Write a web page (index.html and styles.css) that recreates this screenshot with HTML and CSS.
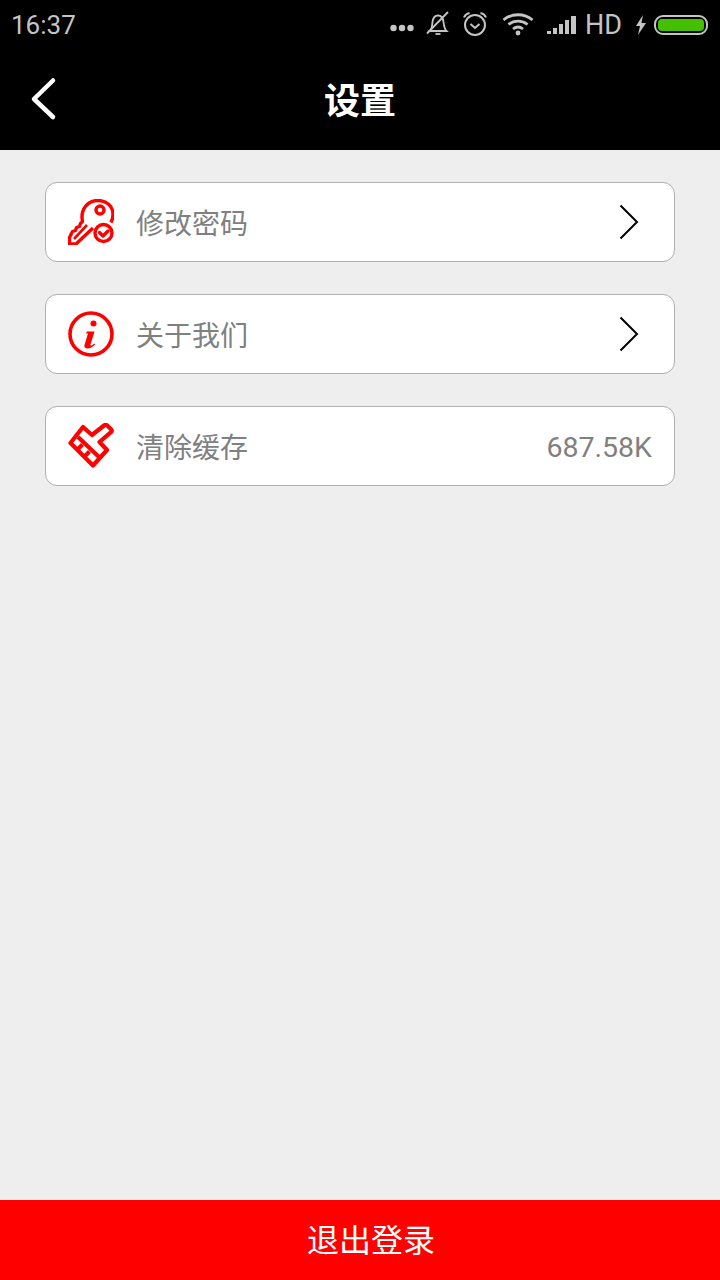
FILE: index.html
```html
<!DOCTYPE html>
<html lang="zh-CN">
<head>
    <meta charset="UTF-8">
    <meta name="viewport" content="width=device-width, initial-scale=1.0">
    <title>设置</title>
    <link rel="stylesheet" href="styles.css">
</head>
<body>
    <div class="page">
        <div class="status-bar">
            <span class="time">16:37</span>
            <div class="status-icons">
                <svg class="st-dots" width="24" height="8" viewBox="0 0 24 8"><circle cx="3.500" cy="4" r="3.200" fill="#c4c4c4"/><circle cx="12" cy="4" r="3.200" fill="#c4c4c4"/><circle cx="20.500" cy="4" r="3.200" fill="#c4c4c4"/></svg>
                <svg class="st-bell" width="24" height="26" viewBox="0 0 24 26" fill="none" stroke="#c4c4c4" stroke-width="1.800"><path d="M4 20c2-2 2-5 2.500-9C7 7 9 4.500 12 4.500S17 7 17.500 11c.5 4 .8 7 3 9H2.500"/><path d="M9.500 23h5"/><path d="M1 22.500 22 1"/></svg>
                <svg class="st-alarm" width="26" height="26" viewBox="0 0 26 26" fill="none" stroke="#c4c4c4" stroke-width="2"><circle cx="13" cy="14" r="10"/><path d="M8.500 13l4.500 4 4.500-4"/><path d="M2 6.500C3 4 5 2.500 7.500 2"/><path d="M24 6.500C23 4 21 2.500 18.500 2"/></svg>
                <svg class="st-wifi" width="32" height="24" viewBox="0 0 32 24" fill="none" stroke="#c4c4c4" stroke-width="2.800"><path d="M1.500 8C9.500 1 22.500 1 30.500 8"/><path d="M6.500 12.500C12 8 20 8 25.500 12.500"/><path d="M11 17c3-2.400 7-2.400 10 0"/><circle cx="16" cy="21" r="2.400" fill="#c4c4c4" stroke="none"/></svg>
                <svg class="st-signal" width="30" height="20" viewBox="0 0 30 20" fill="#c4c4c4"><rect x="0" y="16" width="4" height="3"/><rect x="6" y="13" width="4" height="6"/><rect x="12" y="9" width="4" height="10"/><rect x="18" y="5" width="4" height="14"/><rect x="24" y="1" width="5" height="18"/></svg>
                <span class="st-hd">HD</span>
                <svg class="st-bolt" width="12" height="20" viewBox="0 0 12 20" fill="#c4c4c4"><path d="M8 0 1 11h4l-2 9 8-12H6.500z"/></svg>
                <div class="battery"><div class="battery-fill"></div></div>
            </div>
        </div>

        <div class="title-bar">
            <svg class="back" width="30" height="44" viewBox="0 0 30 44" fill="none" stroke="#fff" stroke-width="4.500" stroke-linecap="round" stroke-linejoin="round"><path d="M24 3.500 5 22l19 18"/></svg>
            <h1>设置</h1>
        </div>

        <div class="content">
            <div class="row">
                <svg class="row-icon" width="46" height="46" viewBox="0 0 46 46" fill="none" stroke="#f00" stroke-width="3.400" stroke-linejoin="round">
                    <path d="M25 29 8 45H1.500v-6.500l3-6 3-1 1-3 3-1 1-3 2-2C12 10 20 1.500 30 1.500c9 0 15 6 15 14 0 3-.5 5-2 8"/>
                    <circle cx="32" cy="11" r="4"/>
                    <path d="M6 40 19 26" stroke-width="2.600"/>
                    <circle cx="35.500" cy="34" r="8.500"/>
                    <path d="M31.500 33.500l3.500 3.500 5-5" stroke-linecap="round"/>
                </svg>
                <span class="row-label">修改密码</span>
                <svg class="chevron" width="22" height="36" viewBox="0 0 22 36" fill="none" stroke="#000" stroke-width="2"><path d="M2.500 1.500 19 18 2.500 34.500"/></svg>
            </div>
            <div class="row">
                <svg class="row-icon" width="46" height="46" viewBox="0 0 46 46">
                    <circle cx="23" cy="23" r="21" fill="none" stroke="#f00" stroke-width="3.600"/>
                    <circle cx="25.500" cy="12.500" r="3" fill="#f00"/>
                    <path d="M19 20.500h7.500l-4 13c-.2 1 .5 1.200 1.500.8l2.500-1.800.5 1.200C24.500 36 22 37.500 19.500 37.500c-2.500 0-3.500-1.500-3-3.500l3.500-11.500h-2z" fill="#f00"/>
                </svg>
                <span class="row-label">关于我们</span>
                <svg class="chevron" width="22" height="36" viewBox="0 0 22 36" fill="none" stroke="#000" stroke-width="2"><path d="M2.500 1.500 19 18 2.500 34.500"/></svg>
            </div>
            <div class="row">
                <svg class="row-icon" width="46" height="46" viewBox="0 0 46 46" fill="none" stroke="#f00" stroke-width="4.200" stroke-linejoin="round">
                    <path d="M2.500 20 15 4l9 8L36 2.500c1.500-1 2.500-.8 3.500.2l3.500 3.500c1 1 1 2 0 3L31.500 19 39 27 25 42.500z"/>
                    <path d="M10 14 32 35"/>
                    <path d="M10 26l4.500-4.500M17 33l4.500-4.500"/>
                </svg>
                <span class="row-label">清除缓存</span>
                <span class="row-value">687.58K</span>
            </div>
        </div>

        <div class="logout">退出登录</div>
    </div>
</body>
</html>
```

FILE: styles.css
```css
body {
    margin: 0;
    font-family: "Noto Sans CJK SC", Roboto, sans-serif;
    background-color: #eeeeee;
}
.page {
    display: flex;
    flex-direction: column;
    height: 1280px;
    overflow: hidden;
}
.status-bar {
    display: flex;
    justify-content: space-between;
    align-items: center;
    height: 50px;
    padding: 0 12px 0 11px;
    background-color: #000;
    color: #c4c4c4;
    font-family: Roboto, sans-serif;
}
.time {
    font-size: 26px;
}
.status-icons {
    display: flex;
    align-items: center;
}
.st-dots {
    margin: 6px 0 0 0;
}
.st-bell {
    margin: -3px 0 0 12px;
}
.st-alarm {
    margin: -3px 0 0 12px;
}
.st-wifi {
    margin: -2px 0 0 14px;
}
.st-signal {
    margin: 0 0 0 13px;
}
.st-hd {
    margin-left: 8px;
    font-size: 27px;
}
.st-bolt {
    margin-left: 13px;
}
.battery {
    margin-left: 7px;
    width: 54px;
    height: 20px;
    padding: 2px;
    box-sizing: border-box;
    border: 2px solid #c4c4c4;
    border-radius: 9px;
}
.battery-fill {
    height: 100%;
    background-color: #44c000;
    border-radius: 4px;
}
.title-bar {
    position: relative;
    display: flex;
    justify-content: center;
    align-items: center;
    height: 100px;
    padding-bottom: 5px;
    box-sizing: border-box;
    background-color: #000;
}
.title-bar h1 {
    margin: 0;
    color: #fff;
    font-size: 36px;
    font-weight: 700;
}
.back {
    position: absolute;
    left: 29px;
    top: 27px;
}
.content {
    flex: 1;
    display: flex;
    flex-direction: column;
    gap: 32px;
    padding: 32px 45px;
}
.row {
    display: flex;
    align-items: center;
    height: 80px;
    padding: 0 22px;
    box-sizing: border-box;
    background-color: #fff;
    border: 1px solid #b0b0b0;
    border-radius: 12px;
}
.row-icon {
    flex-shrink: 0;
}
.row-label {
    flex: 1;
    margin-left: 22px;
    color: #808080;
    font-size: 28px;
}
.row-value {
    margin-top: 3px;
    color: #808080;
    font-size: 28.500px;
    font-family: Roboto, sans-serif;
}
.chevron {
    margin-right: 12px;
}
.logout {
    height: 80px;
    line-height: 76px;
    padding-left: 22px;
    text-align: center;
    background-color: #f00;
    color: #fff;
    font-size: 32px;
}
```
